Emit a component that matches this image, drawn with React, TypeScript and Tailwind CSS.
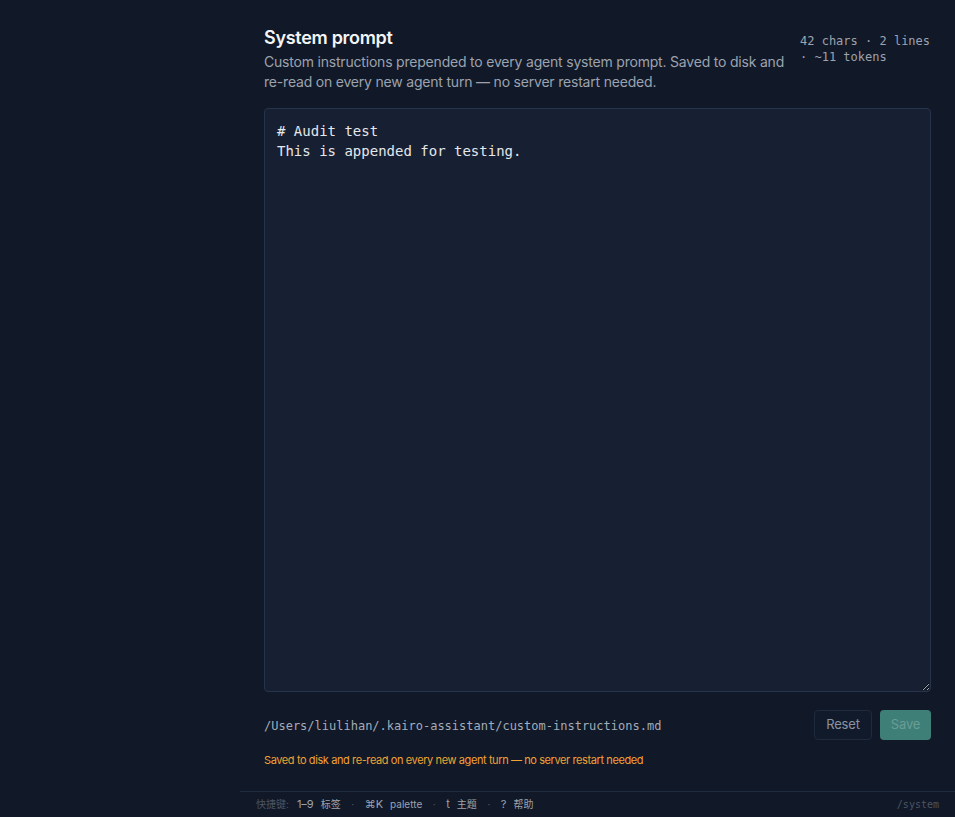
import React from "react";

const mono = "font-['DejaVu_Sans_Mono','Noto_Sans_CJK_SC',monospace]";
const sans = "font-['Inter','Noto_Sans_CJK_SC',sans-serif]";

function Key({ k, label }: { k: string; label: string }) {
  return (
    <span className="flex items-center gap-[7px] text-[#9ca3af]">
      <span className="text-[11px]">{k}</span>
      <span>{label}</span>
    </span>
  );
}

function Sep() {
  return <span className="mx-[10px] w-[4px] text-center text-[#4b5563]">·</span>;
}

export default function App() {
  const value = "# Audit test\nThis is appended for testing.";
  return (
    <div className={`h-[817px] w-full bg-[#111827] flex ${sans}`}>
      <aside className="w-[240px] shrink-0 bg-[#111827]" />
      <div className="flex-1 flex flex-col min-w-0">
        <main className="flex-1 px-6 pt-6 overflow-hidden">
          <div className="flex items-start gap-[13px]">
            <div className="flex-1 min-w-0">
              <h1 className="text-lg leading-7 font-semibold tracking-[-0.3px] text-[#f3f4f6]">System prompt</h1>
              <p className="text-sm leading-5 tracking-[-0.2px] text-[#9ca3af]">
                Custom instructions prepended to every agent system prompt. Saved to disk and re-read on every new agent turn — no server restart needed.
              </p>
            </div>
            <div className={`w-[131px] shrink-0 mt-[9px] text-xs leading-4 text-[#9ca3af] ${mono}`}>
              42 chars · 2 lines · ~11 tokens
            </div>
          </div>
          <textarea
            defaultValue={value}
            spellCheck={false}
            className={`mt-4 block w-full h-[584px] rounded border border-[#263349] bg-[#162032] px-3 py-3 text-sm leading-5 text-[#e5e7eb] outline-none ${mono}`}
          />
          <div className="mt-[18px] flex items-center justify-between">
            <span className={`text-xs leading-5 pt-px text-[#a3acb9] ${mono}`}>/Users/liulihan/.kairo-assistant/custom-instructions.md</span>
            <div className="flex items-center gap-2">
              <button className="h-[30px] w-[58px] rounded border border-[#1f2a3c] bg-[#111a2b] text-[13px] tracking-[-0.2px] text-[#8b93a1]">
                Reset
              </button>
              <button className="h-[30px] w-[51px] rounded bg-[#3e7f78] text-[13px] tracking-[-0.2px] text-[#6a9c96]">
                Save
              </button>
            </div>
          </div>
          <div className="mt-3 text-[11px] leading-4 tracking-[-0.4px] text-[#f0a234]">
            Saved to disk and re-read on every new agent turn — no server restart needed
          </div>
        </main>
        <footer className="h-[26px] shrink-0 border-t border-[#1f2b40] bg-[#111827] px-4 flex items-center justify-between text-[10px]">
          <div className="flex items-center whitespace-pre">
            <span className="text-[#4b5563]">快捷键:</span>
            <span className="ml-[8px]" />
            <Key k="1–9" label="标签" />
            <Sep />
            <Key k="⌘K" label="palette" />
            <Sep />
            <Key k="t" label="主题" />
            <Sep />
            <Key k="?" label="帮助" />
          </div>
          <span className={`text-[#4b5563] ${mono}`}>/system</span>
        </footer>
      </div>
    </div>
  );
}
